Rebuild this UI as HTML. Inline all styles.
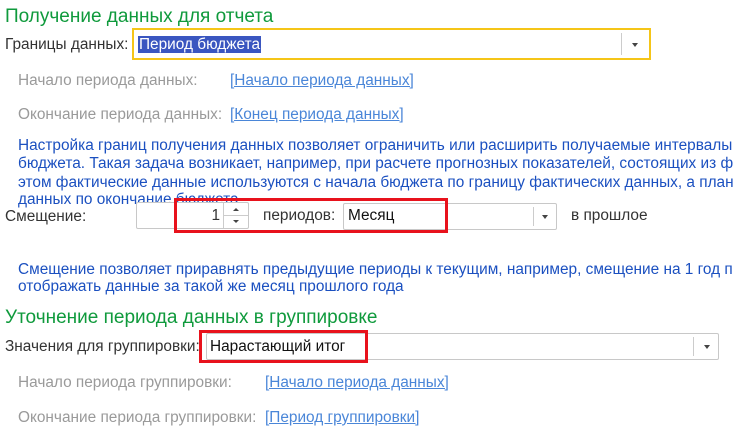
<!DOCTYPE html>
<html><head><meta charset="utf-8"><style>
body{margin:0;width:735px;height:440px;overflow:hidden;background:#fff;font-family:"Liberation Sans",Arial,sans-serif;font-size:15.4px;position:relative}
.a{position:absolute;white-space:nowrap;line-height:18px}
.h{color:#0f9a3c;font-size:19px;line-height:22px}
.g{color:#9a9a9a}
.l{color:#4a86d8;text-decoration:underline}
.b{color:#1b50c0}
.k{color:#333}
.box{position:absolute;border:1px solid #c8c8c8;background:#fff;box-sizing:border-box;border-radius:2px}
.div{position:absolute;top:3px;bottom:3px;width:1px;background:#ccc}
.arr{position:absolute;width:0;height:0;border-left:3px solid transparent;border-right:3px solid transparent;border-top:4px solid #444}
.red{position:absolute;border:3px solid #e8121c;box-sizing:border-box}
</style></head><body>
<div class="a h" style="left:5px;top:6px">Получение данных для отчета</div>
<div class="a k" style="left:5px;top:36px">Границы данных:</div>
<div class="box" style="left:132px;top:28px;width:519px;height:32px;border:2px solid #f5c518;border-radius:0">
  <div class="div" style="left:487px"></div><div class="arr" style="left:498px;top:13px"></div>
</div>
<div class="a" style="left:138px;top:36px;height:17px;background:#3a56c0;color:#fff;line-height:17px;padding:0 1px">Период бюджета</div>
<div class="a g" style="left:18px;top:72px">Начало периода данных:</div>
<div class="a l" style="left:230px;top:72px">[Начало периода данных]</div>
<div class="a g" style="left:18px;top:106px">Окончание периода данных:</div>
<div class="a l" style="left:230px;top:106px">[Конец периода данных]</div>
<div class="a b" style="left:18px;top:137px">Настройка границ получения данных позволяет ограничить или расширить получаемые интервалы</div>
<div class="a b" style="left:18px;top:155px">бюджета. Такая задача возникает, например, при расчете прогнозных показателей, состоящих из ф</div>
<div class="a b" style="left:18px;top:174px">этом фактические данные используются с начала бюджета по границу фактических данных, а план</div>
<div class="a b" style="left:18px;top:191px">данных по окончание бюджета</div>
<div class="a k" style="left:5px;top:208px;background:transparent">Смещение:</div>
<div class="box" style="left:136px;top:202px;width:113px;height:27px">
  <div style="position:absolute;left:86px;top:0;bottom:0;width:1px;background:#ccc"></div>
  <div style="position:absolute;left:86px;right:0;top:12px;height:1px;background:#ccc"></div>
  <div class="arr" style="left:96px;top:5px;border-top:0;border-bottom:3px solid #444"></div>
  <div class="arr" style="left:96px;top:17px;border-top-width:3px"></div>
</div>
<div class="a k" style="left:200px;top:207px;width:20px;text-align:right">1</div>
<div class="a k" style="left:263px;top:207px">периодов:</div>
<div class="box" style="left:343px;top:203px;width:214px;height:27px">
  <div class="div" style="left:189px"></div><div class="arr" style="left:198px;top:11px"></div>
</div>
<div class="a" style="left:348px;top:207px;color:#111">Месяц</div>
<div class="a k" style="left:571px;top:207px">в прошлое</div>
<div class="red" style="left:174px;top:198px;width:274px;height:35px"></div>
<div class="a b" style="left:18px;top:261px">Смещение позволяет приравнять предыдущие периоды к текущим, например, смещение на 1 год п</div>
<div class="a b" style="left:18px;top:278px">отображать данные за такой же месяц прошлого года</div>
<div class="a h" style="left:5px;top:307px">Уточнение периода данных в группировке</div>
<div class="a k" style="left:5px;top:338px">Значения для группировки:</div>
<div class="box" style="left:206px;top:333px;width:513px;height:27px">
  <div class="div" style="left:486px"></div><div class="arr" style="left:497px;top:11px"></div>
</div>
<div class="a" style="left:210px;top:338px;color:#111">Нарастающий итог</div>
<div class="red" style="left:199px;top:330px;width:169px;height:33px"></div>
<div class="a g" style="left:18px;top:374px">Начало периода группировки:</div>
<div class="a l" style="left:265px;top:374px">[Начало периода данных]</div>
<div class="a g" style="left:18px;top:409px">Окончание периода группировки:</div>
<div class="a l" style="left:265px;top:409px">[Период группировки]</div>
</body></html>
